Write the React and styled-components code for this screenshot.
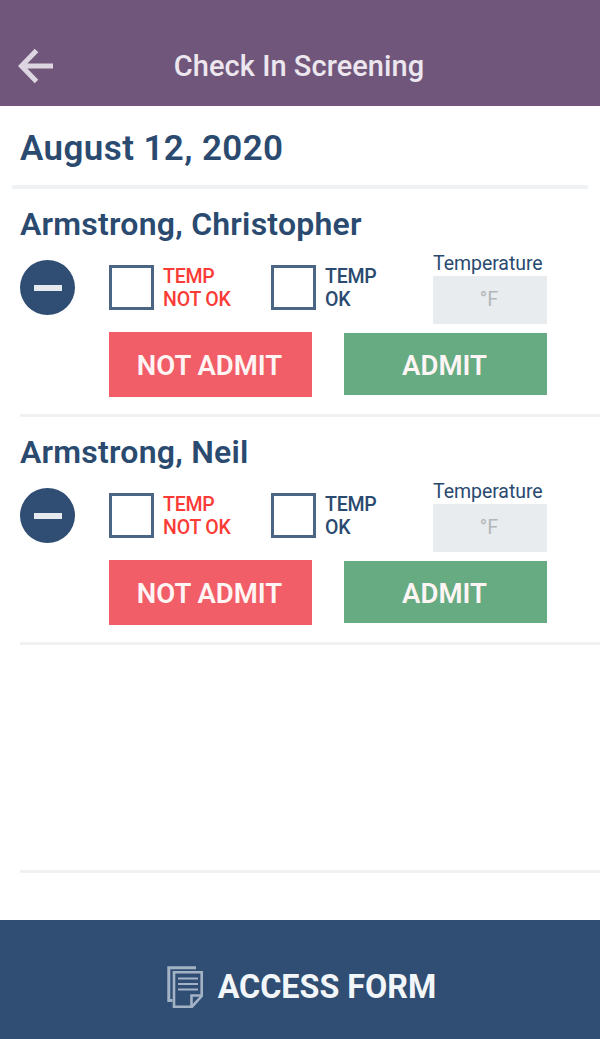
/**
 *
 * CheckInScreening
 *
 */

import React from 'react';
import styled, { createGlobalStyle, ThemeProvider } from 'styled-components';

const theme = {
  colors: {
    brand: '#71567b',
    navy: '#304e73',
    text: '#2a4a70',
    danger: '#f25e67',
    alert: '#fb3b35',
    success: '#66ab82',
    field: '#e8ecef',
    placeholder: '#b4b7ba',
    line: '#f0f1f2',
    dateLine: '#eef2f4',
    white: '#ffffff',
  },
};

const GlobalStyle = createGlobalStyle`
  * {
    box-sizing: border-box;
  }
  body {
    margin: 0;
    background: #ffffff;
    font-family: Roboto, 'Liberation Sans', sans-serif;
  }
  button,
  input {
    font-family: inherit;
    border: 0;
    border-radius: 0;
    padding: 0;
    margin: 0;
  }
`;

const Screen = styled.div`
  display: flex;
  flex-direction: column;
  width: 600px;
  height: 1039px;
  overflow: hidden;
  background: ${({ theme }) => theme.colors.white};
  color: ${({ theme }) => theme.colors.text};
`;

const Header = styled.header`
  display: grid;
  grid-template-columns: 72px 1fr 74px;
  align-items: center;
  height: 106px;
  padding-top: 26px;
  background: ${({ theme }) => theme.colors.brand};
`;

const BackButton = styled.button`
  display: flex;
  padding-left: 18px;
  background: none;
`;

const Title = styled.h1`
  margin: 0;
  font-size: 29px;
  font-weight: 500;
  letter-spacing: 0.05px;
  line-height: 34px;
  text-align: center;
  white-space: nowrap;
  color: #ece6ee;
`;

const DateHeading = styled.h2`
  flex: none;
  height: 83px;
  margin: 0 12px;
  padding: 22px 8px 0;
  border-bottom: 4px solid ${({ theme }) => theme.colors.dateLine};
  font-size: 35px;
  font-weight: 600;
  letter-spacing: 0.4px;
  line-height: 42px;
`;

const List = styled.ul`
  flex: 1;
  margin: 0;
  padding: 0 0 0 20px;
  list-style: none;
`;

const Row = styled.li`
  height: 228px;
  padding-top: 16px;
  border-bottom: 3px solid ${({ theme }) => theme.colors.line};
`;

const Name = styled.h3`
  margin: 0;
  font-size: 32px;
  font-weight: 600;
  letter-spacing: 0.23px;
  line-height: 38px;
  white-space: nowrap;
`;

const Controls = styled.div`
  display: grid;
  grid-template-columns: 89px 162px 162px 114px;
  height: 81px;
`;

const RemoveButton = styled.button`
  display: flex;
  align-items: center;
  justify-content: center;
  width: 55px;
  height: 55px;
  margin-top: 17px;
  border-radius: 50%;
  background: ${({ theme }) => theme.colors.navy};
`;

const Minus = styled.span`
  width: 28px;
  height: 6px;
  background: #e6eaef;
`;

const CheckOption = styled.label`
  display: flex;
  gap: 9px;
  padding-top: 22px;
  color: ${({ theme, $alert }) =>
    $alert ? theme.colors.alert : theme.colors.text};
`;

const CheckText = styled.span`
  padding-top: 1px;
  font-size: 19.5px;
  font-weight: 500;
  letter-spacing: -0.2px;
  line-height: 22.5px;
  white-space: pre;
`;

const Checkbox = styled.input.attrs({ type: 'checkbox' })`
  appearance: none;
  flex: none;
  width: 45px;
  height: 45px;
  border: 3px solid #4b6585;
  background: ${({ theme }) => theme.colors.white};
`;

const TemperatureField = styled.label`
  display: flex;
  flex-direction: column;
  padding-top: 9px;
  font-size: 19.5px;
  letter-spacing: -0.05px;
  line-height: 24px;
`;

const TemperatureInput = styled.input`
  width: 114px;
  height: 48px;
  padding: 0 2px 2px 0;
  background: ${({ theme }) => theme.colors.field};
  font-size: 20px;
  text-align: center;
  &::placeholder {
    color: ${({ theme }) => theme.colors.placeholder};
  }
`;

const Actions = styled.div`
  display: flex;
  align-items: flex-start;
  gap: 32px;
  padding: 8px 0 0 89px;
`;

const ActionButton = styled.button`
  width: 203px;
  height: ${({ $admit }) => ($admit ? 62 : 65)}px;
  margin-top: ${({ $admit }) => ($admit ? 1 : 0)}px;
  padding: ${({ $admit }) => ($admit ? 4 : 3)}px 2px 0 0;
  background: ${({ theme, $admit }) =>
    $admit ? theme.colors.success : theme.colors.danger};
  color: #fff5f5;
  font-size: 27.5px;
  font-weight: 600;
  line-height: 58px;
`;

const Footer = styled.button`
  display: flex;
  flex: none;
  align-items: center;
  justify-content: center;
  gap: 14px;
  height: 119px;
  padding: 14px 0 0 3px;
  background: ${({ theme }) => theme.colors.navy};
  color: #f3f6f9;
  font-size: 32.3px;
  font-weight: 700;
`;

const BackIcon = () => (
  <svg width="36" height="36" viewBox="0 0 36 36" fill="none">
    <path
      d="M35 18H4M18.5 2.5L3.5 18L18.5 33.5"
      stroke="#ddd5e0"
      strokeWidth="5"
    />
  </svg>
);

const FormIcon = () => (
  <svg
    width="37"
    height="42"
    viewBox="0 0 37 42"
    fill="none"
    stroke="#a3b2c5"
    strokeWidth="2.6"
  >
    <path d="M29 1.8H1.8V34.5H5.5" strokeWidth="3" />
    <path d="M7 6.3H34.7V30L25 40.7H7Z" />
    <path d="M34.7 29.5H24.5V41" />
    <path d="M11 12.5H31M11 18H31M11 23.5H31" strokeWidth="2.2" />
  </svg>
);

const attendees = [
  { id: 1, name: 'Armstrong, Christopher' },
  { id: 2, name: 'Armstrong, Neil' },
];

function AttendeeRow({ name }) {
  return (
    <Row>
      <Name>{name}</Name>
      <Controls>
        <RemoveButton aria-label="Remove">
          <Minus />
        </RemoveButton>
        <CheckOption $alert>
          <Checkbox />
          <CheckText>{'TEMP\nNOT OK'}</CheckText>
        </CheckOption>
        <CheckOption>
          <Checkbox />
          <CheckText>{'TEMP\nOK'}</CheckText>
        </CheckOption>
        <TemperatureField>
          Temperature
          <TemperatureInput placeholder="°F" />
        </TemperatureField>
      </Controls>
      <Actions>
        <ActionButton>NOT ADMIT</ActionButton>
        <ActionButton $admit>ADMIT</ActionButton>
      </Actions>
    </Row>
  );
}

export default function App() {
  return (
    <ThemeProvider theme={theme}>
      <GlobalStyle />
      <Screen>
        <Header>
          <BackButton aria-label="Back">
            <BackIcon />
          </BackButton>
          <Title>Check In Screening</Title>
        </Header>
        <DateHeading>August 12, 2020</DateHeading>
        <List>
          {attendees.map(({ id, name }) => (
            <AttendeeRow key={id} name={name} />
          ))}
          <Row />
        </List>
        <Footer>
          <FormIcon />
          ACCESS FORM
        </Footer>
      </Screen>
    </ThemeProvider>
  );
}
